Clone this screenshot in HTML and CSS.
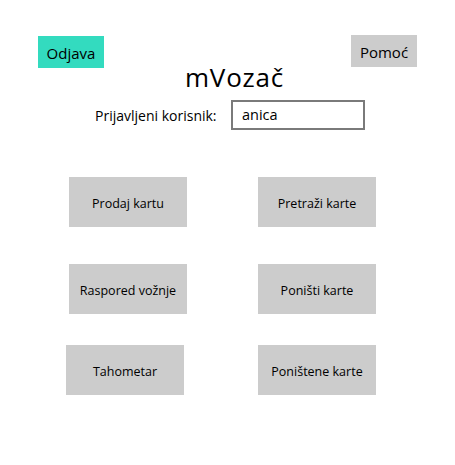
FILE: index.html
```html
<!DOCTYPE html>
<html>
<head>
<meta charset="utf-8">
<link rel="stylesheet" href="styles.css">
</head>
<body>
<div class="window">
  <div class="top">
    <div class="btn btn-odjava">Odjava</div>
    <div class="title">mVozač</div>
    <div class="btn btn-pomoc">Pomoć</div>
  </div>
  <div class="user-row">
    <span class="user-label">Prijavljeni korisnik:</span>
    <div class="user-box">anica</div>
  </div>
  <div class="menu">
    <div class="menu-row row1">
      <div class="tile">Prodaj kartu</div>
      <div class="tile">Pretraži karte</div>
    </div>
    <div class="menu-row row2">
      <div class="tile">Raspored vožnje</div>
      <div class="tile">Poništi karte</div>
    </div>
    <div class="menu-row row3">
      <div class="tile tile-shift">Tahometar</div>
      <div class="tile">Poništene karte</div>
    </div>
  </div>
</div>
</body>
</html>
```
FILE: styles.css
```css
html, body {
  margin: 0;
  padding: 0;
  background: #ffffff;
}
body {
  font-family: "Open Sans", "Noto Sans", sans-serif;
  color: #000;
  width: 455px;
  height: 465px;
}
.window {
  display: flex;
  flex-direction: column;
}
.top {
  display: flex;
  align-items: flex-start;
  padding: 35px 38px 0 38px;
  height: 62px;
  box-sizing: border-box;
}
.btn {
  width: 66px;
  height: 32px;
  display: flex;
  align-items: center;
  justify-content: center;
  font-size: 15px;
  padding-top: 1px;
  box-sizing: border-box;
}
.btn-odjava {
  background: #33dbbf;
  margin-top: 1px;
}
.btn-pomoc {
  background: #cccccc;
  margin-left: auto;
}
.title {
  font-size: 26px;
  line-height: 34px;
  letter-spacing: 0.8px;
  margin-left: 81px;
  margin-top: 25px;
  white-space: nowrap;
}
.user-row {
  display: flex;
  align-items: center;
  margin-top: 38px;
  padding-left: 95px;
  height: 30px;
}
.user-label {
  font-size: 14px;
  width: 136px;
  padding-top: 1px;
  white-space: nowrap;
}
.user-box {
  width: 134px;
  height: 30px;
  box-sizing: border-box;
  border: 2px solid #7a7a7a;
  font-size: 14.5px;
  line-height: 26px;
  padding-left: 9px;
}
.menu {
  display: flex;
  flex-direction: column;
  padding-left: 69px;
}
.menu-row {
  display: flex;
  gap: 71px;
}
.row1 { margin-top: 47px; }
.row2 { margin-top: 37px; }
.row3 { margin-top: 31px; }
.tile {
  width: 118px;
  height: 50px;
  background: #cccccc;
  display: flex;
  align-items: center;
  justify-content: center;
  font-size: 12.5px;
  padding-top: 2px;
  box-sizing: border-box;
  white-space: nowrap;
}
.tile-shift {
  margin-left: -3px;
  margin-right: 3px;
}
```
